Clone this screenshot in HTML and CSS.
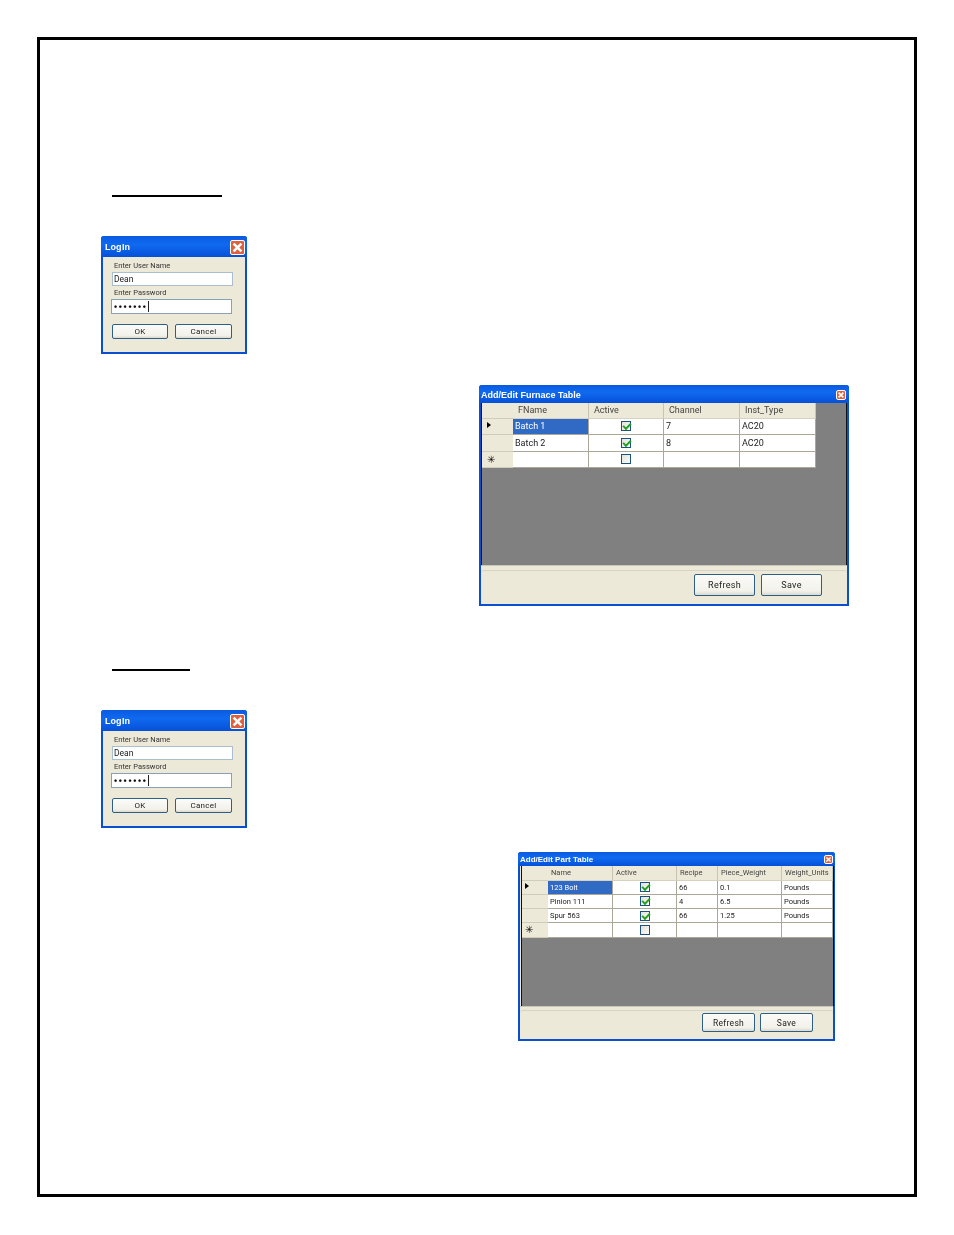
FILE: index.html
```html
<!DOCTYPE html>
<html lang="en">
<head>
<meta charset="utf-8">
<title>Login and table windows</title>
<link rel="stylesheet" href="styles.css">
</head>
<body>
<main class="page">
  <hr class="rule rule-first">
  <section class="win login">
    <header class="titlebar"><span>Log In</span><span class="close close-big"><svg viewBox="0 0 10 10"><path d="M2 2L8 8M8 2L2 8"/></svg></span></header>
    <div class="login-body">
      <label class="lbl">Enter User Name</label>
      <div class="input">Dean</div>
      <label class="lbl">Enter Password</label>
      <div class="input input-pw"><span class="dots">•••••••</span><i class="caret"></i></div>
      <div class="login-btns"><button class="btn">OK</button><button class="btn">Cancel</button></div>
    </div>
  </section>

  <section class="win grid-win furnace">
    <header class="titlebar"><span>Add/Edit Furnace Table</span><span class="close"><svg viewBox="0 0 10 10"><path d="M2 2L8 8M8 2L2 8"/></svg></span></header>
    <div class="well">
      <div class="table">
        <div class="row head"><div class="rh"></div><div class="hc">FName</div><div class="hc">Active</div><div class="hc">Channel</div><div class="hc">Inst_Type</div></div>
        <div class="row"><div class="rh"><i class="arrow"></i></div><div class="c sel">Batch 1</div><div class="c ck"><i class="box on"></i></div><div class="c">7</div><div class="c">AC20</div></div>
        <div class="row"><div class="rh"></div><div class="c">Batch 2</div><div class="c ck"><i class="box on"></i></div><div class="c">8</div><div class="c">AC20</div></div>
        <div class="row"><div class="rh">✳</div><div class="c"></div><div class="c ck"><i class="box"></i></div><div class="c"></div><div class="c"></div></div>
      </div>
    </div>
    <footer class="foot"><div class="foot-panel"><button class="btn">Refresh</button><button class="btn">Save</button></div></footer>
  </section>

  <hr class="rule rule-second">
  <section class="win login">
    <header class="titlebar"><span>Log In</span><span class="close close-big"><svg viewBox="0 0 10 10"><path d="M2 2L8 8M8 2L2 8"/></svg></span></header>
    <div class="login-body">
      <label class="lbl">Enter User Name</label>
      <div class="input">Dean</div>
      <label class="lbl">Enter Password</label>
      <div class="input input-pw"><span class="dots">•••••••</span><i class="caret"></i></div>
      <div class="login-btns"><button class="btn">OK</button><button class="btn">Cancel</button></div>
    </div>
  </section>

  <section class="win grid-win part">
    <header class="titlebar"><span>Add/Edit Part Table</span><span class="close"><svg viewBox="0 0 10 10"><path d="M2 2L8 8M8 2L2 8"/></svg></span></header>
    <div class="well">
      <div class="table">
        <div class="row head"><div class="rh"></div><div class="hc">Name</div><div class="hc">Active</div><div class="hc">Recipe</div><div class="hc">Piece_Weight</div><div class="hc">Weight_Units</div></div>
        <div class="row"><div class="rh"><i class="arrow"></i></div><div class="c sel">123 Bolt</div><div class="c ck"><i class="box on"></i></div><div class="c">66</div><div class="c">0.1</div><div class="c">Pounds</div></div>
        <div class="row"><div class="rh"></div><div class="c">Pinion 111</div><div class="c ck"><i class="box on"></i></div><div class="c">4</div><div class="c">6.5</div><div class="c">Pounds</div></div>
        <div class="row"><div class="rh"></div><div class="c">Spur 563</div><div class="c ck"><i class="box on"></i></div><div class="c">66</div><div class="c">1.25</div><div class="c">Pounds</div></div>
        <div class="row"><div class="rh">✳</div><div class="c"></div><div class="c ck"><i class="box"></i></div><div class="c"></div><div class="c"></div><div class="c"></div></div>
      </div>
    </div>
    <footer class="foot"><div class="foot-panel"><button class="btn">Refresh</button><button class="btn">Save</button></div></footer>
  </section>
</main>
</body>
</html>
```
FILE: styles.css
```css
* { box-sizing: border-box; }
html, body { margin: 0; padding: 0; background: #fff; }
body { width: 954px; height: 1235px; overflow: hidden; font-family: Roboto, "Liberation Sans", Arial, sans-serif; color: #222; }
.page { margin: 37px 0 0 37px; width: 880px; height: 1160px; border: 3px solid #000; padding: 0 0 0 61px; }

.rule { display: block; height: 2px; margin: 0 0 0 11px; border: 0; background: #000; }
.rule-first { width: 110px; margin-top: 155px; }
.rule-second { width: 78px; margin-top: 63px; }

.win { display: flex; flex-direction: column; background: #ece9d8; border: 2px solid #0a4fd0; border-top: 0; border-radius: 3px 3px 0 0; filter: blur(.3px); }
.titlebar { display: flex; align-items: center; justify-content: space-between; background: linear-gradient(#0a5ae0, #0f6af0 40%, #0650d8); color: #fff; font-family: "Liberation Sans", Arial, sans-serif; font-weight: 700; font-size: 9px; margin: 0 -2px; border-radius: 3px 3px 0 0; }
.close { width: 10px; height: 10px; margin-right: 3px; background: #e0603c; border: 1px solid #fff; border-radius: 2px; display: flex; }
.close svg { width: 100%; height: 100%; }
.close path { stroke: #fff; stroke-width: 2; fill: none; }
.close-big { width: 15px; height: 15px; margin-right: 2px; }

.login { width: 146px; height: 118px; margin-top: 39px; }
.login .titlebar { height: 21px; padding: 1px 0 0 4px; font-size: 9px; word-spacing: -2px; }
.login-body { display: flex; flex-direction: column; padding: 2px 0 0 8px; }
.lbl { font-size: 7.5px; line-height: 9px; margin: 2px 0 2px 3px; color: #333; white-space: nowrap; }
.input { width: 121px; height: 14px; background: #fff; border: 1px solid #a9bfd0; font-size: 8.5px; line-height: 12px; padding-left: 1px; margin-left: 1px; display: flex; align-items: center; }
.input-pw { height: 15px; margin-left: 0; border-color: #8aa0b4; padding-left: 2px; }
.dots { font-family: "Liberation Sans", Arial, sans-serif; font-size: 9px; letter-spacing: 1.65px; color: #111; font-weight: 700; }
.caret { display: inline-block; width: 1px; height: 11px; background: #222; }
.login-btns { display: flex; gap: 7px; margin: 10px 0 0 1px; }
.login-btns .btn { width: 56px; height: 15px; }
.login-btns .btn + .btn { width: 57px; }

.btn { padding: 0; font: 8px Roboto, "Liberation Sans", Arial, sans-serif; letter-spacing: .3px; color: #222; background: linear-gradient(#fbfbf8, #f2f1ea 80%, #dcd9cc); border: 1px solid #2f5f86; border-radius: 2px; }

.furnace { width: 370px; height: 221px; margin: 31px 0 0 378px; }
.furnace .titlebar { height: 18px; padding: 2px 0 0 2px; }
.part { width: 317px; height: 189px; margin: 24px 0 0 417px; }
.part .titlebar { height: 14px; padding-left: 2px; font-size: 8px; }
.part .close { width: 9px; height: 9px; margin-right: 2px; }

.well { background: #808080; border-left: 1px solid #111; border-right: 1px solid #111; flex: none; }
.furnace .well { height: 162px; }
.part .well { height: 140px; margin: 0 -1px 0 1px; }
.table { display: flex; flex-direction: column; font-size: 8px; }
.row { display: grid; }
.furnace .table { width: 334px; font-size: 9px; }
.furnace .row { grid-template-columns: 31px 76px 75px 76px 76px; height: 16.5px; }
.furnace .row.head { height: 15.5px; }
.part .table { width: 311px; font-size: 7.5px; }
.part .row { grid-template-columns: 26px 65px 64px 41px 64px 51px; height: 14.25px; }
.part .row.head { height: 14.5px; }

.rh { background: #ece9d8; border-bottom: 1px solid #cfccbc; display: flex; align-items: center; justify-content: flex-start; color: #111; padding-left: 5px; font-size: 10px; }
.part .rh { padding-left: 3px; }
.hc { background: #ece9d8; display: flex; align-items: center; padding-left: 5px; border-right: 1px solid #c8c5b4; border-bottom: 1px solid #d5d2c2; color: #444; white-space: nowrap; }
.part .hc { padding-left: 3px; }
.c { background: #fff; border-right: 1px solid #aca899; border-bottom: 1px solid #aca899; display: flex; align-items: center; padding-left: 2px; color: #222; overflow: hidden; white-space: nowrap; }
.sel { background: #316ac5; color: #fff; }
.ck { justify-content: center; padding: 0; }
.box { display: block; width: 10px; height: 10px; border: 1px solid #1c5180; background: linear-gradient(135deg, #e4e2da, #fbfbf8); }
.box.on::after { content: ""; display: block; width: 6px; height: 3px; margin: 1px 0 0 1px; border-left: 2px solid #21a121; border-bottom: 2px solid #21a121; transform: rotate(-45deg); }
.arrow { display: block; width: 0; height: 0; border-left: 4px solid #000; border-top: 3.5px solid transparent; border-bottom: 3.5px solid transparent; margin-bottom: 2px; }

.foot { flex: 1; display: flex; padding-top: 4px; border-top: 1px solid #c9c7b8; }
.foot-panel { flex: 1; display: flex; justify-content: flex-end; align-items: flex-start; gap: 6px; border-top: 1px solid #d6d4c6; border-radius: 3px 3px 0 0; }
.furnace .foot-panel { padding: 3px 25px 0 0; }
.furnace .btn { width: 61px; height: 22px; font-size: 9px; }
.part .foot { padding-top: 3px; }
.part .foot-panel { padding: 2px 20px 0 0; gap: 5px; }
.part .btn { width: 53px; height: 19px; font-size: 8.5px; }
```
